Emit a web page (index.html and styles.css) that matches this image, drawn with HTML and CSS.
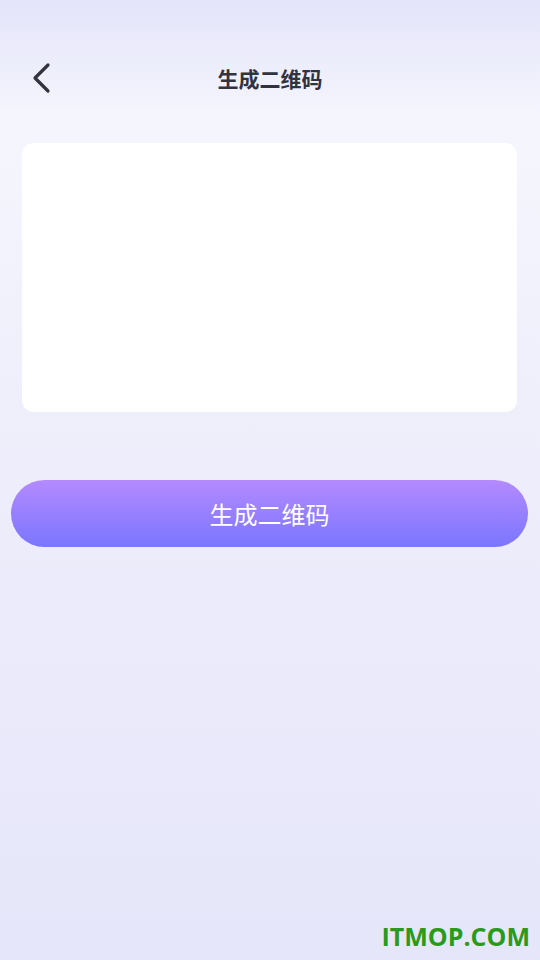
FILE: index.html
```html
<!DOCTYPE html>
<html lang="zh-CN">
<head>
    <meta charset="UTF-8">
    <meta name="viewport" content="width=device-width, initial-scale=1.0">
    <title>生成二维码</title>
    <link rel="stylesheet" href="styles.css">
</head>
<body>
    <div class="page">
        <div class="header">
            <div class="back">
                <svg width="24" height="32" viewBox="0 0 24 32">
                    <path d="M18 3 L5 16 L18 29" fill="none" stroke="#33323f" stroke-width="3.2" stroke-linecap="round" stroke-linejoin="round"/>
                </svg>
            </div>
            <p class="title">生成二维码</p>
        </div>

        <div class="card"></div>

        <div class="btn">生成二维码</div>

        <div class="mark">ITMOP.COM</div>
    </div>
</body>
</html>
```

FILE: styles.css
```css
*{
    box-sizing: border-box;
    font-family: "Noto Sans CJK SC", "Noto Sans", sans-serif;
}
body{
    margin: 0;
}
.page{
    width: 540px;
    height: 960px;
    display: flex;
    flex-direction: column;
    background: linear-gradient(180deg, #e4e4fa 0px, #f5f6fd 120px, #f1f1fc 300px, #ebebfb 600px, #e6e6fa 960px);
}
.header{
    height: 143px;
    padding-top: 56px;
    position: relative;
}
.back{
    position: absolute;
    left: 30px;
    top: 62px;
}
.title{
    margin: 0;
    text-align: center;
    font-size: 21px;
    font-weight: 700;
    line-height: 44px;
    color: #33323f;
}
.card{
    margin: 0 23px 0 22px;
    height: 269px;
    background: #ffffff;
    border-radius: 12px;
}
.btn{
    margin: 68px 12px 0 11px;
    height: 67px;
    border-radius: 34px;
    background: linear-gradient(180deg, #b48aff, #7a76ff);
    color: #ffffff;
    font-size: 24px;
    display: flex;
    align-items: center;
    justify-content: center;
}
.mark{
    margin-top: auto;
    padding: 0 10px 4px 0;
    text-align: right;
    font-family: "Open Sans", sans-serif;
    font-weight: 700;
    font-size: 25px;
    color: #2a9a1a;
    line-height: 40px;
}
```
